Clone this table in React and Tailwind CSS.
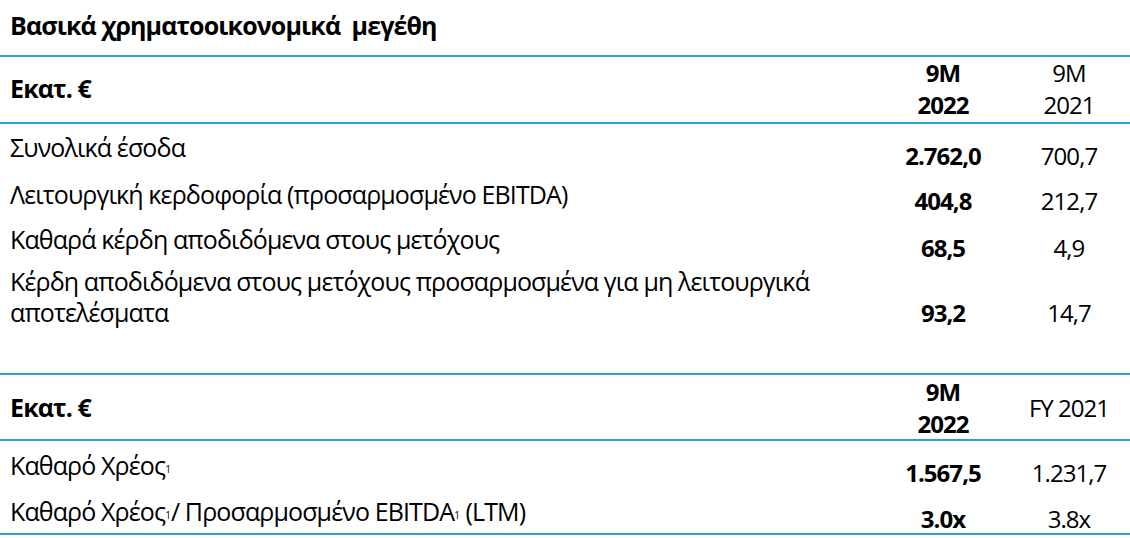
import React from 'react';

const Line = () => <div className="h-[2px] bg-[#2f9fd0]" />;

const Row = ({ h, lpt, vpt, label, a, b }) => (
  <div className={`grid grid-cols-[878px_130px_122px] ${h}`}>
    <div className={`pl-[10px] ${lpt}`}>{label}</div>
    <div className={`text-center font-bold text-[24px] tracking-[-0.04em] ${vpt}`}>{a}</div>
    <div className={`text-center text-[24px] tracking-[-0.04em] ${vpt}`}>{b}</div>
  </div>
);

const Sup = () => <span className="text-[10px] relative -top-[2px] tracking-normal">1</span>;

const App = () => {
  return (
    <div className="w-[1130px] h-[538px] bg-white text-black font-['Open_Sans',sans-serif] text-[25px] leading-[31px] tracking-[-0.035em]">
      <div className="h-[55px] pl-[10px] pt-[10px] font-bold whitespace-pre">Βασικά χρηματοοικονομικά  μεγέθη</div>
      <Line />

      <div className="grid grid-cols-[878px_130px_122px] h-[65px]">
        <div className="pl-[10px] pt-[16px] font-bold">Εκατ. €</div>
        <div className="text-center font-bold leading-[32px] text-[24px] tracking-[-0.04em]">9M<br />2022</div>
        <div className="text-center leading-[32px] text-[24px] tracking-[-0.04em]">9M<br />2021</div>
      </div>
      <Line />

      <div className="h-[249px]">
        <Row h="h-[47px]" lpt="pt-[8px]" vpt="pt-[16px]" label="Συνολικά έσοδα" a="2.762,0" b="700,7" />
        <Row h="h-[45px]" lpt="pt-[8px]" vpt="pt-[14px]" label="Λειτουργική κερδοφορία (προσαρμοσμένο EBITDA)" a="404,8" b="212,7" />
        <Row h="h-[42px]" lpt="pt-[8px]" vpt="pt-[16px]" label="Καθαρά κέρδη αποδιδόμενα στους μετόχους" a="68,5" b="4,9" />
        <Row
          h="h-[115px]"
          lpt="pt-[8px]"
          vpt="pt-[39px]"
          label={<>Κέρδη αποδιδόμενα στους μετόχους προσαρμοσμένα για μη λειτουργικά<br />αποτελέσματα</>}
          a="93,2"
          b="14,7"
        />
      </div>
      <Line />

      <div className="grid grid-cols-[878px_130px_122px] h-[64px]">
        <div className="pl-[10px] pt-[17px] font-bold">Εκατ. €</div>
        <div className="text-center font-bold leading-[32px] pt-[1px] text-[24px] tracking-[-0.04em]">9M<br />2022</div>
        <div className="text-center pt-[17px] text-[24px] tracking-[-0.04em]">FY 2021</div>
      </div>
      <Line />

      <div className="h-[92px]">
        <Row h="h-[46px]" lpt="pt-[9px]" vpt="pt-[16px]" label={<>Καθαρό Χρέος<Sup /></>} a="1.567,5" b="1.231,7" />
        <Row
          h="h-[46px]"
          lpt="pt-[9px]"
          vpt="pt-[16px]"
          label={<>Καθαρό Χρέος<Sup />/ Προσαρμοσμένο EBITDA<Sup /> (LTM)</>}
          a="3.0x"
          b="3.8x"
        />
      </div>
      <Line />
    </div>
  );
};

export default App;
